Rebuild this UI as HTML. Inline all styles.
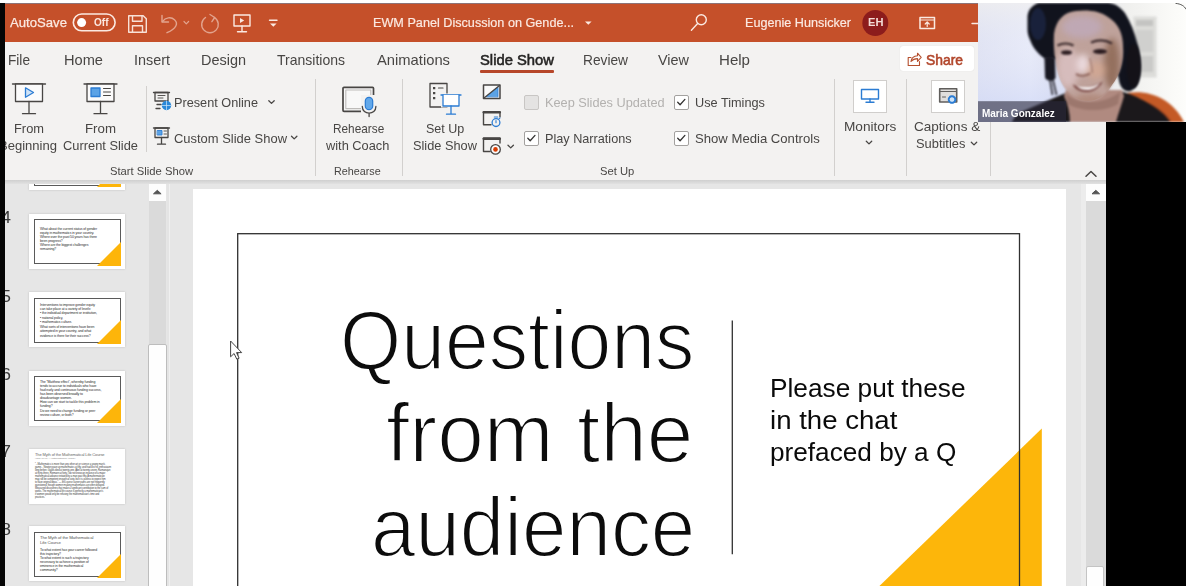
<!DOCTYPE html>
<html lang="en"><head><meta charset="utf-8"><title>PowerPoint - EWM Panel Discussion</title>
<style>
html,body{margin:0;padding:0;}
body{width:1186px;height:586px;overflow:hidden;background:#f3f2f1;font-family:"Liberation Sans",sans-serif;}
#root{position:relative;width:1186px;height:586px;overflow:hidden;background:#f3f2f1;}
.a{position:absolute;}
.t{position:absolute;white-space:pre;transform-origin:0 50%;}
.sep{position:absolute;width:1px;background:#d2d0ce;top:79px;height:97px;}
.cb{position:absolute;width:12.5px;height:12.5px;border:1px solid #a3a19f;border-radius:2px;background:#fff;box-sizing:content-box;}
.ibox{position:absolute;background:#fff;border:1px solid #d0cecc;box-sizing:border-box;}
.thumb{position:absolute;left:29px;width:96px;height:55px;background:#fff;box-shadow:0 0 2px rgba(0,0,0,.18);overflow:hidden;}
.thumb .fr{position:absolute;left:5px;top:5.5px;right:4.5px;bottom:4.5px;border:1.4px solid #5a5a5a;}
.thumb .tri{position:absolute;right:4px;bottom:3px;width:0;height:0;border-left:24px solid transparent;border-bottom:24px solid #fdb50a;}
.ln{position:absolute;height:1px;background:#777;opacity:.75;}
.tt{position:absolute;white-space:nowrap;font-size:3.5px;line-height:4.1px;color:#2c2c2c;font-family:"Liberation Sans",sans-serif;letter-spacing:-.12px;}

</style></head>
<body>
<div id="root">
<!-- top dark strip -->
<div class="a" style="left:0;top:0;width:1186px;height:3px;background:#fff"></div>
<div class="a" style="left:4px;top:3px;width:975px;height:1.2px;background:#8d7377"></div>
<!-- title bar -->
<div class="a" style="left:0;top:4px;width:990px;height:38px;background:#c5502a"></div>
<!-- tabs + ribbon background -->
<div class="a" style="left:0;top:42px;width:1106px;height:139px;background:#f3f2f1"></div>
<div class="a" style="left:0;top:180px;width:1106px;height:5px;background:linear-gradient(#cfcfcf,#e6e6e6)"></div>
<!-- work area -->
<div class="a" style="left:0;top:184px;width:1106px;height:402px;background:#e6e6e6"></div>

<!-- title bar icons -->
<svg class="a" style="left:0;top:3px" width="990" height="39" viewBox="0 3 990 39" fill="none" stroke="#fbe9e1" stroke-width="1.4" stroke-linecap="round" stroke-linejoin="round">
  <!-- autosave toggle -->
  <rect x="73.3" y="14" width="41.8" height="16.8" rx="8.4" stroke-width="1.6"/>
  <circle cx="81.6" cy="22.6" r="4.5" fill="#fff" stroke="none"/>
  <!-- save -->
  <g opacity=".95"><path d="M128.7 15.7h14.5l3.1 3.1v13.5h-17.6z"/><path d="M132.5 15.7v5.6h9.5v-5.6"/><path d="M132.5 32.3v-6.6h10v6.6"/></g>
  <!-- undo -->
  <g opacity=".55"><path d="M162 15.5v6.5h6.5"/><path d="M162.5 21.5c3-4 8.5-5 12-1.8c4 3.6 2 9-7.5 13"/>
  <path d="M184 21.5l2.3 2.3l2.3-2.3" stroke-width="1.2"/>
  <!-- redo -->
  <path d="M214.5 17.5a8.3 8.3 0 1 1-9 0"/><path d="M210 14.5l4.7 3l-2.8 4.2"/></g>
  <!-- present -->
  <g><rect x="234" y="15" width="16" height="11"/><path d="M242 26v5.5M237.5 31.7h9"/><path d="M240 18l4.2 2.5l-4.2 2.5z" fill="#fbe9e1" stroke="none"/></g>
  <!-- customize -->
  <path d="M269.5 20.2h7.5" /><path d="M270 23.5l3.3 3.2l3.3-3.2z" fill="#fbe9e1" stroke="none"/>
  <!-- title caret -->
  <path d="M585 21.5l3.3 3.3l3.3-3.3z" fill="#fbe9e1" stroke="none"/>
  <!-- search -->
  <circle cx="701.3" cy="19.8" r="5"/><path d="M697.6 23.6l-6.2 6.6"/>
  <!-- avatar -->
  <circle cx="875.3" cy="23" r="13" fill="#8c1c1c" stroke="none"/>
  <!-- ribbon display options -->
  <rect x="920" y="17.5" width="14.5" height="11" stroke-width="1.5"/><path d="M920 20h14.5" stroke-width="1"/><path d="M927.2 26.5v-4M925.2 24l2-2l2 2" stroke-width="1.2"/>
  <!-- minimize -->
  <path d="M972 23.5h8"/>
</svg>

<!-- Slide Show tab underline -->
<div class="a" style="left:480px;top:70px;width:74px;height:3px;background:#b7472a;border-radius:1px"></div>
<!-- share button -->
<div class="a" style="left:899.5px;top:46px;width:74px;height:24.5px;background:#fff;border-radius:3px;box-shadow:0 0 1px rgba(0,0,0,.15)"></div>
<svg class="a" style="left:905px;top:50px" width="18" height="18" viewBox="0 0 18 18" fill="none" stroke="#b5502f" stroke-width="1.1" stroke-linejoin="round" stroke-linecap="round">
  <path d="M6 7.5H3.2v8h11.3v-4"/><path d="M6 11.5c.5-3.5 3-5.5 6.5-5.7V3.2l3.7 4.1l-3.7 4.1V8.6c-2.8 0-4.8 .8-6.5 2.9z"/>
</svg>

<!-- ribbon separators -->
<div class="sep" style="left:146px;top:86px;height:66px"></div>
<div class="sep" style="left:314.5px"></div>
<div class="sep" style="left:401.5px"></div>
<div class="sep" style="left:834px"></div>
<div class="sep" style="left:905.5px"></div>
<div class="sep" style="left:989.5px"></div>

<!-- ribbon icons -->
<svg class="a" style="left:0;top:78px" width="1106" height="104" viewBox="0 78 1106 104" fill="none" stroke="#484644" stroke-width="1.3" stroke-linecap="round" stroke-linejoin="round">
  <!-- From Beginning -->
  <path d="M12.5 84h33"/><rect x="15.5" y="84" width="27" height="17.5" fill="#fbfbfb"/><path d="M29 101.5v12M22.5 113.7h13"/>
  <path d="M25.5 87.8l8 4.7l-8 4.7z" stroke="#2b7cd3" fill="#cfe3f7"/>
  <!-- From Current -->
  <path d="M84 84h33"/><rect x="87" y="84" width="27" height="17.5" fill="#fbfbfb"/><path d="M100.5 101.5v12M94 113.7h13"/>
  <rect x="91" y="88" width="9" height="8.5" fill="#5ba3e6" stroke="#2b7cd3"/><path d="M103.5 88.5h7M103.5 92h7M103.5 95.5h7" stroke-width="1"/>
  <!-- Present Online -->
  <path d="M153.5 92.5h16"/><rect x="155" y="92.5" width="13" height="8.5"/><path d="M158 95.5h7M158 98h5" stroke-width=".9"/><path d="M157 104.5h4M156 108.5h4"/>
  <circle cx="166.5" cy="105.5" r="4.7" fill="#2b88d8" stroke="none"/><path d="M162 105.5h9M166.5 101v9" stroke="#cfe6fa" stroke-width=".7"/>
  <path d="M268.8 100.7l2.7 2.7l2.7-2.7"/>
  <!-- Custom Slide Show -->
  <path d="M153.5 128h16"/><rect x="155" y="128" width="13" height="9.5"/><rect x="157.5" y="130.5" width="4.5" height="4.5" fill="#5ba3e6" stroke="#2b7cd3" stroke-width=".9"/><path d="M164 131h2.5M164 134h2.5" stroke-width=".9"/><path d="M161.5 137.5v6.5M157.5 144.2h8"/>
  <path d="M291.5 136.2l2.7 2.7l2.7-2.7"/>
  <!-- Rehearse with Coach -->
  <rect x="343" y="87.3" width="30.5" height="24" rx="1" stroke-width="1.7" fill="#f8f8f8"/><rect x="345.8" y="90" width="25" height="18.6" stroke="#bdbbb9" stroke-width="1.1"/>
  <rect x="361" y="95" width="17" height="23" fill="#f3f2f1" stroke="none"/>
  <rect x="365.3" y="97.3" width="7.4" height="12.4" rx="3.7" fill="#62a8ea" stroke="#2b7cd3" stroke-width="1.2"/><path d="M362.3 106.5c0 8.8 13.6 8.8 13.6 0M369.1 113.2v3.3"/>
  <!-- Set Up Slide Show -->
  <rect x="430" y="83.5" width="17" height="23.5"/><path d="M433 86.9h2.3v2.3h-2.3zM433 91.9h2.3v2.3h-2.3zM433 96.9h2.3v2.3h-2.3z" fill="#484644" stroke="none"/><path d="M438.5 88h4.5" stroke-width="1.2"/>
  <rect x="441" y="93.5" width="20" height="14" fill="#f3f2f1" stroke="none"/>
  <g stroke="#2b7cd3"><path d="M441 95h20"/><path d="M443 95v11h16v-11" fill="#fff"/><path d="M451 106v8M446.5 114.2h9"/></g>
  <!-- small icons -->
  <rect x="483.5" y="85" width="16.5" height="13.5" stroke-width="1.5" fill="#fafafa"/><path d="M486.5 96.5l11.5-9.3v9.3z" fill="#5ba3e6" stroke="#2b7cd3" stroke-width=".8"/><path d="M484 98l15.5-12.5" stroke-width="1.3"/>
  <path d="M483.5 124.8v-13h16.5v5M483.5 124.8h7.5" stroke-width="1.4"/><path d="M483.5 112.3h16.5" stroke-width="2.2"/><circle cx="496" cy="122.6" r="3.9" stroke="#2b7cd3" fill="#f3f2f1" stroke-width="1.3"/><path d="M496 120.6v2.2M494.3 117h3.4M499 118.8l1-1" stroke="#2b7cd3" stroke-width="1.1"/>
  <path d="M483.5 151.5v-13.5h16.5v5M483.5 151.5h6.5" stroke-width="1.4"/><path d="M483.5 138.8h16.5" stroke-width="2.2"/><circle cx="495.5" cy="149.4" r="4.8" fill="#fbfbfb" stroke-width="1.3"/><circle cx="495.5" cy="149.4" r="2.3" fill="#d83b01" stroke="none"/>
  <path d="M508 145.2l2.7 2.7l2.7-2.7"/>
  <!-- Monitors caret & Subtitles caret & collapse -->
  <path d="M866.3 141.2l2.7 2.7l2.7-2.7"/>
  <path d="M971.3 142.2l2.7 2.7l2.7-2.7"/>
  <path d="M1086 176.3l5-4.8l5 4.8" stroke-width="1.5"/>
</svg>
<!-- checkboxes -->
<div class="cb" style="left:524.3px;top:95px;border-color:#c8c6c4;background:#e4e3e2"></div>
<div class="cb" style="left:524.3px;top:131px"></div>
<div class="cb" style="left:674.2px;top:95px"></div>
<div class="cb" style="left:674.2px;top:131px"></div>
<svg class="a" style="left:520px;top:90px" width="180" height="60" viewBox="520 90 180 60" fill="none" stroke="#323130" stroke-width="1.3" stroke-linecap="round" stroke-linejoin="round">
  <path d="M527.8 138.3l2.4 2.4l4.8-5.3"/><path d="M677.7 102.3l2.4 2.4l4.8-5.3"/><path d="M677.7 138.3l2.4 2.4l4.8-5.3"/>
</svg>
<!-- Monitors / captions icon boxes -->
<div class="ibox" style="left:853px;top:80px;width:34px;height:32.5px"></div>
<div class="ibox" style="left:931px;top:80px;width:34px;height:32.5px"></div>
<svg class="a" style="left:850px;top:78px" width="120" height="40" viewBox="850 78 120 40" fill="none" stroke-width="1.4" stroke-linejoin="round" stroke-linecap="round">
  <g stroke="#2b7cd3"><rect x="861.5" y="89.5" width="17" height="9.5"/><path d="M870 99v3M866 102.3h8"/></g>
  <g stroke="#605e5c"><rect x="939.7" y="88.7" width="17" height="13.3" fill="#e1dfdd" stroke-width="1.6"/><path d="M940 91.5h16.5" stroke-width="1"/><path d="M942.5 97h3" stroke-width="1"/></g>
  <circle cx="952" cy="99.5" r="3.3" stroke="#2b7cd3" fill="#cfe3f7" stroke-width="2" stroke-dasharray="1.6 1"/>
</svg>
<!-- thumbnail pane -->
<div class="a" style="left:0;top:184px;width:148px;height:402px;overflow:hidden">
<div class="thumb" style="top:-49px"><div class="fr"></div><div class="tri"></div></div>
<div class="thumb" style="top:29.5px"><div class="fr"></div><div class="tri"></div>
  <div class="tt" style="left:11px;top:13px">What about the current status of gender<br>equity in mathematics in your country.<br>Where over the past 50 years has there<br>been progress?<br>Where are the biggest challenges<br>remaining?</div></div>
<div class="thumb" style="top:108px"><div class="fr"></div><div class="tri"></div>
  <div class="tt" style="left:11px;top:10.5px;line-height:4.45px">Interventions to improve gender equity<br>can take place at a variety of levels:<br>• the individual department or institution,<br>• national policy,<br>• mathematics culture.<br>What sorts of interventions have been<br>attempted in your country, and what<br>evidence is there for their success?</div></div>
<div class="thumb" style="top:186.5px"><div class="fr"></div><div class="tri"></div>
  <div class="tt" style="left:11px;top:9px;line-height:4.15px">The “Matthew effect”, whereby funding<br>tends to accrue to individuals who have<br>had early and continuous funding success,<br>has been observed broadly to<br>disadvantage women.<br>How can we start to tackle this problem in<br>funding?<br>Do we need to change funding or peer<br>review culture, or both?</div></div>
<div class="thumb" style="top:264.5px">
  <div class="tt" style="left:6px;top:3.5px;font-size:4px;line-height:5px;color:#666">The Myth of the Mathematical Life Course</div>
  <div class="tt" style="left:6px;top:8.5px;font-size:2.4px;line-height:3px;color:#888">Hardy (1940), “A Mathematician’s Apology”</div>
  <div class="tt" style="left:6px;top:14px;font-size:2.6px;line-height:3.05px;color:#444">“...Mathematics is more than any other art or science a young man’s<br>game... Newton gave up mathematics at fifty, and had lost his enthusiasm<br>long before. Galois died at twenty-one, Abel at twenty-seven, Ramanujan<br>at thirty-three, Riemann at forty. I do not know an instance of a major<br>mathematical advance initiated by a man past fifty. A mathematician<br>may still be competent enough at sixty, but it is useless to expect him<br>to have original ideas.” — life-course career paths are not frequently<br>questioned, though women making mathematics are often delayed.<br>Measured discoveries that make a significant contribution to the sum of<br>works. The mathematical life course is perfectly a mathematician’s<br>if women would only be refusing the mathematician’s time and<br>practices.”</div></div>
<div class="thumb" style="top:342px"><div class="fr"></div><div class="tri"></div>
  <div class="tt" style="left:11px;top:9px;font-size:4.3px;line-height:5.2px;color:#555">The Myth of the Mathematical<br>Life Course</div>
  <div class="tt" style="left:11px;top:22px;line-height:4.05px">To what extent has your career followed<br>this trajectory?<br>To what extent is such a trajectory<br>necessary to achieve a position of<br>eminence in the mathematical<br>community?</div></div>
</div>
<!-- thumbnail scrollbar -->
<div class="a" style="left:148.5px;top:184px;width:17.5px;height:402px;background:#dadada"></div>
<div class="a" style="left:148.5px;top:183.5px;width:17.5px;height:17px;background:#fdfdfd"></div>
<div class="a" style="left:148px;top:343.5px;width:17px;height:250px;background:#fefefe;border:1px solid #bdbdbd;border-radius:2px"></div>
<div class="a" style="left:166.8px;top:184px;width:2.4px;height:402px;background:#e4e4e4"></div>
<div class="a" style="left:169.2px;top:184px;width:1.2px;height:402px;background:#f0f0f0"></div>
<!-- canvas -->
<div class="a" style="left:192.5px;top:188.5px;width:873.5px;height:398px;background:#fff"></div>
<!-- right scrollbar -->
<div class="a" style="left:1086px;top:184px;width:19.5px;height:402px;background:#dadada"></div>
<div class="a" style="left:1086px;top:183.5px;width:19.5px;height:17px;background:#fdfdfd"></div>
<div class="a" style="left:1086.3px;top:565.5px;width:16px;height:30px;background:#fefefe;border:1px solid #c4c4c4;border-radius:2px"></div>
<div class="a" style="left:1081px;top:184px;width:5px;height:402px;background:#ececec"></div>
<svg class="a" style="left:140px;top:180px" width="970" height="30" viewBox="140 180 970 30"><path d="M153.5 193.8l3.8-3.5l3.8 3.5z" fill="#555" stroke="#555" stroke-width="1" stroke-linejoin="round"/><path d="M1092 193.8l3.8-3.5l3.8 3.5z" fill="#555" stroke="#555" stroke-width="1" stroke-linejoin="round"/></svg>
<!-- slide art -->
<svg class="a" style="left:192px;top:188px" width="874" height="398" viewBox="192 188 874 398">
  <path d="M1041.8 428.6V590H875.3z" fill="#fdb60a"/>
  <rect x="237.7" y="233.7" width="781.8" height="400" fill="none" stroke="#303030" stroke-width="1.3"/>
  <path d="M732.3 320.5V554.2" stroke="#303030" stroke-width="1.3"/>
  <!-- mouse cursor -->
  <path d="M230.6 341v15.8l3.5-3.3l2.7 5.7l2.3-1l-2.6-5.6h5.2z" fill="#fff" stroke="#444" stroke-width="1" stroke-linejoin="round"/>
</svg>

<span class="t" style="left:9.6px;top:14.8px;font-size:13.4px;line-height:16.08px;color:#fbe9e1;font-weight:400;font-family:'Liberation Sans', sans-serif;transform:scaleX(0.9814);-webkit-text-stroke:.25px #fbe9e1;">AutoSave</span>
<span class="t" style="left:94.3px;top:16.6px;font-size:10px;line-height:12.0px;color:#fbe9e1;font-weight:700;font-family:'Liberation Sans', sans-serif;transform:scaleX(1.0032);">Off</span>
<span class="t" style="left:373.0px;top:15.1px;font-size:13.2px;line-height:15.84px;color:#fbe9e1;font-weight:400;font-family:'Liberation Sans', sans-serif;transform:scaleX(0.9588);-webkit-text-stroke:.2px #fbe9e1;">EWM Panel Discussion on Gende...</span>
<span class="t" style="left:745.0px;top:15.1px;font-size:13.2px;line-height:15.84px;color:#fbe9e1;font-weight:400;font-family:'Liberation Sans', sans-serif;transform:scaleX(0.9575);-webkit-text-stroke:.2px #fbe9e1;">Eugenie Hunsicker</span>
<span class="t" style="left:867.5px;top:17.0px;font-size:10px;line-height:12.0px;color:#f3dcd6;font-weight:700;font-family:'Liberation Sans', sans-serif;transform:scaleX(1.1146);">EH</span>
<span class="t" style="left:8.0px;top:51.0px;font-size:15px;line-height:18.0px;color:#484644;font-weight:400;font-family:'Liberation Sans', sans-serif;transform:scaleX(0.9101);">File</span>
<span class="t" style="left:64.0px;top:51.0px;font-size:15px;line-height:18.0px;color:#484644;font-weight:400;font-family:'Liberation Sans', sans-serif;transform:scaleX(0.9746);">Home</span>
<span class="t" style="left:134.0px;top:51.0px;font-size:15px;line-height:18.0px;color:#484644;font-weight:400;font-family:'Liberation Sans', sans-serif;transform:scaleX(0.9596);">Insert</span>
<span class="t" style="left:201.0px;top:51.0px;font-size:15px;line-height:18.0px;color:#484644;font-weight:400;font-family:'Liberation Sans', sans-serif;transform:scaleX(0.9635);">Design</span>
<span class="t" style="left:277.0px;top:51.0px;font-size:15px;line-height:18.0px;color:#484644;font-weight:400;font-family:'Liberation Sans', sans-serif;transform:scaleX(0.9339);">Transitions</span>
<span class="t" style="left:377.0px;top:51.0px;font-size:15px;line-height:18.0px;color:#484644;font-weight:400;font-family:'Liberation Sans', sans-serif;transform:scaleX(0.9838);">Animations</span>
<span class="t" style="left:480.0px;top:51.0px;font-size:15px;line-height:18.0px;color:#252423;font-weight:400;font-family:'Liberation Sans', sans-serif;transform:scaleX(0.9861);-webkit-text-stroke:.55px #252423;">Slide Show</span>
<span class="t" style="left:583.0px;top:51.0px;font-size:15px;line-height:18.0px;color:#484644;font-weight:400;font-family:'Liberation Sans', sans-serif;transform:scaleX(0.9149);">Review</span>
<span class="t" style="left:658.0px;top:51.0px;font-size:15px;line-height:18.0px;color:#484644;font-weight:400;font-family:'Liberation Sans', sans-serif;transform:scaleX(0.9612);">View</span>
<span class="t" style="left:719.0px;top:51.0px;font-size:15px;line-height:18.0px;color:#484644;font-weight:400;font-family:'Liberation Sans', sans-serif;transform:scaleX(1.0046);">Help</span>
<span class="t" style="left:926.0px;top:50.5px;font-size:15px;line-height:18.0px;color:#b1452a;font-weight:400;font-family:'Liberation Sans', sans-serif;transform:scaleX(0.9243);-webkit-text-stroke:.6px #b1452a;">Share</span>
<span class="t" style="left:14.0px;top:120.6px;font-size:13px;line-height:15.6px;color:#484644;font-weight:400;font-family:'Liberation Sans', sans-serif;transform:scaleX(0.9887);">From</span>
<span class="t" style="left:-1.0px;top:137.9px;font-size:13px;line-height:15.6px;color:#484644;font-weight:400;font-family:'Liberation Sans', sans-serif;transform:scaleX(1.0030);">Beginning</span>
<span class="t" style="left:85.0px;top:120.6px;font-size:13px;line-height:15.6px;color:#484644;font-weight:400;font-family:'Liberation Sans', sans-serif;transform:scaleX(1.0216);">From</span>
<span class="t" style="left:63.0px;top:137.9px;font-size:13px;line-height:15.6px;color:#484644;font-weight:400;font-family:'Liberation Sans', sans-serif;transform:scaleX(0.9885);">Current Slide</span>
<span class="t" style="left:174.0px;top:94.7px;font-size:13px;line-height:15.6px;color:#484644;font-weight:400;font-family:'Liberation Sans', sans-serif;transform:scaleX(0.9767);">Present Online</span>
<span class="t" style="left:174.0px;top:130.7px;font-size:13px;line-height:15.6px;color:#484644;font-weight:400;font-family:'Liberation Sans', sans-serif;transform:scaleX(0.9960);">Custom Slide Show</span>
<span class="t" style="left:110.0px;top:165.1px;font-size:11.5px;line-height:13.8px;color:#484644;font-weight:400;font-family:'Liberation Sans', sans-serif;transform:scaleX(0.9763);">Start Slide Show</span>
<span class="t" style="left:333.0px;top:120.6px;font-size:13px;line-height:15.6px;color:#484644;font-weight:400;font-family:'Liberation Sans', sans-serif;transform:scaleX(0.9082);">Rehearse</span>
<span class="t" style="left:326.2px;top:137.9px;font-size:13px;line-height:15.6px;color:#484644;font-weight:400;font-family:'Liberation Sans', sans-serif;transform:scaleX(0.9858);">with Coach</span>
<span class="t" style="left:334.3px;top:165.1px;font-size:11.5px;line-height:13.8px;color:#484644;font-weight:400;font-family:'Liberation Sans', sans-serif;transform:scaleX(0.9363);">Rehearse</span>
<span class="t" style="left:425.5px;top:120.6px;font-size:13px;line-height:15.6px;color:#484644;font-weight:400;font-family:'Liberation Sans', sans-serif;transform:scaleX(0.9635);">Set Up</span>
<span class="t" style="left:412.8px;top:137.9px;font-size:13px;line-height:15.6px;color:#484644;font-weight:400;font-family:'Liberation Sans', sans-serif;transform:scaleX(0.9824);">Slide Show</span>
<span class="t" style="left:544.8px;top:94.7px;font-size:13px;line-height:15.6px;color:#b3b1af;font-weight:400;font-family:'Liberation Sans', sans-serif;transform:scaleX(0.9791);">Keep Slides Updated</span>
<span class="t" style="left:544.8px;top:131.0px;font-size:13px;line-height:15.6px;color:#484644;font-weight:400;font-family:'Liberation Sans', sans-serif;transform:scaleX(0.9744);">Play Narrations</span>
<span class="t" style="left:694.8px;top:94.7px;font-size:13px;line-height:15.6px;color:#484644;font-weight:400;font-family:'Liberation Sans', sans-serif;transform:scaleX(0.9772);">Use Timings</span>
<span class="t" style="left:694.8px;top:131.0px;font-size:13px;line-height:15.6px;color:#484644;font-weight:400;font-family:'Liberation Sans', sans-serif;transform:scaleX(1.0092);">Show Media Controls</span>
<span class="t" style="left:600.4px;top:165.1px;font-size:11.5px;line-height:13.8px;color:#484644;font-weight:400;font-family:'Liberation Sans', sans-serif;transform:scaleX(0.9752);">Set Up</span>
<span class="t" style="left:843.7px;top:118.5px;font-size:13px;line-height:15.6px;color:#484644;font-weight:400;font-family:'Liberation Sans', sans-serif;transform:scaleX(1.0490);">Monitors</span>
<span class="t" style="left:914.4px;top:118.5px;font-size:13px;line-height:15.6px;color:#484644;font-weight:400;font-family:'Liberation Sans', sans-serif;transform:scaleX(1.0410);">Captions &amp;</span>
<span class="t" style="left:916.3px;top:135.6px;font-size:13px;line-height:15.6px;color:#484644;font-weight:400;font-family:'Liberation Sans', sans-serif;transform:scaleX(0.9905);">Subtitles</span>
<span class="t" style="left:1.2px;top:208.3px;font-size:17px;line-height:20.4px;color:#3a3a3a;font-weight:400;font-family:'Liberation Sans', sans-serif;transform:scaleX(1.0561);">4</span>
<span class="t" style="left:1.2px;top:287.0px;font-size:17px;line-height:20.4px;color:#3a3a3a;font-weight:400;font-family:'Liberation Sans', sans-serif;transform:scaleX(1.0561);">5</span>
<span class="t" style="left:1.2px;top:365.3px;font-size:17px;line-height:20.4px;color:#3a3a3a;font-weight:400;font-family:'Liberation Sans', sans-serif;transform:scaleX(1.0561);">6</span>
<span class="t" style="left:1.2px;top:441.8px;font-size:17px;line-height:20.4px;color:#3a3a3a;font-weight:400;font-family:'Liberation Sans', sans-serif;transform:scaleX(1.0561);">7</span>
<span class="t" style="left:1.2px;top:520.1px;font-size:17px;line-height:20.4px;color:#3a3a3a;font-weight:400;font-family:'Liberation Sans', sans-serif;transform:scaleX(1.0561);">8</span>
<span class="t" style="left:340.2px;top:289.9px;font-size:84px;line-height:100.8px;color:#0c0c0c;font-weight:400;font-family:'Liberation Sans', sans-serif;transform:scaleX(0.9368);-webkit-text-stroke:2px #fff;">Questions</span>
<span class="t" style="left:386.2px;top:383.3px;font-size:84px;line-height:100.8px;color:#0c0c0c;font-weight:400;font-family:'Liberation Sans', sans-serif;transform:scaleX(0.9980);-webkit-text-stroke:2px #fff;">from the</span>
<span class="t" style="left:370.9px;top:476.7px;font-size:84px;line-height:100.8px;color:#0c0c0c;font-weight:400;font-family:'Liberation Sans', sans-serif;transform:scaleX(0.9511);-webkit-text-stroke:2px #fff;">audience</span>
<span class="t" style="left:770.1px;top:373.3px;font-size:25px;line-height:30.0px;color:#0a0a0a;font-weight:400;font-family:'Liberation Sans', sans-serif;transform:scaleX(1.0497);">Please put these</span>
<span class="t" style="left:770.1px;top:405.1px;font-size:25px;line-height:30.0px;color:#0a0a0a;font-weight:400;font-family:'Liberation Sans', sans-serif;transform:scaleX(1.1035);">in the chat</span>
<span class="t" style="left:770.1px;top:436.8px;font-size:25px;line-height:30.0px;color:#0a0a0a;font-weight:400;font-family:'Liberation Sans', sans-serif;transform:scaleX(1.0473);">prefaced by a Q</span>
<!-- black regions -->
<div class="a" style="left:0;top:3px;width:4.6px;height:583px;background:#050505"></div>
<div class="a" style="left:1106px;top:121px;width:80px;height:465px;background:#000"></div>
<!-- strip above video is light -->
<div class="a" style="left:978px;top:0;width:208px;height:3.5px;background:#fff"></div>
<!-- video tile -->
<div class="a" id="vid" style="left:978px;top:3px;width:208px;height:118.5px;overflow:hidden;background:#e9e9f1">
<svg width="208" height="119" viewBox="978 3 208 119" style="position:absolute;left:0;top:0">
  <defs>
  <filter color-interpolation-filters="sRGB" id="b0" x="-20%" y="-20%" width="140%" height="140%"><feGaussianBlur stdDeviation="0.8"/></filter>
  <filter color-interpolation-filters="sRGB" id="b1" x="-20%" y="-20%" width="140%" height="140%"><feGaussianBlur stdDeviation="1.3"/></filter>
  <filter color-interpolation-filters="sRGB" id="b2" x="-30%" y="-30%" width="160%" height="160%"><feGaussianBlur stdDeviation="3"/></filter>
  <filter color-interpolation-filters="sRGB" id="b3" x="-30%" y="-30%" width="160%" height="160%"><feGaussianBlur stdDeviation="5"/></filter>
  <linearGradient id="wall" x1="0" x2="1"><stop offset="0" stop-color="#e0e3f3"/><stop offset=".25" stop-color="#e9ecfa"/><stop offset=".4" stop-color="#dde0f0"/><stop offset=".72" stop-color="#f0f0ee"/><stop offset="1" stop-color="#fdfdfb"/></linearGradient><linearGradient id="wallv" x1="0" x2="0" y1="0" y2="1"><stop offset="0" stop-color="#f0efee" stop-opacity=".7"/><stop offset=".35" stop-color="#e4e6f4" stop-opacity=".2"/><stop offset="1" stop-color="#c9d3f7" stop-opacity=".75"/></linearGradient>
  <clipPath id="faceclip"><path d="M1054 34c2-14 10-22 22-23c12-1.5 24 0 32 6c10 6 15 16 15 30c1 14-3 28-11 38c-5 9-14 16-24 16c-10 0-20-6-26-18c-6-12-9-32-8-49z"/></clipPath>
  </defs>
  <rect x="978" y="3" width="208" height="119" fill="url(#wall)"/>
  <rect x="978" y="3" width="90" height="119" fill="url(#wallv)"/>
  <!-- poster on wall -->
  <g filter="url(#b0)"><rect x="1133.5" y="16.5" width="23" height="61" fill="#dcdcd9"/><rect x="1136" y="20" width="17" height="6" fill="#c4c4c2"/><rect x="1136" y="30" width="17" height="22" fill="#d0d0ce"/><rect x="1136" y="56" width="17" height="16" fill="#cacac8"/></g>
  <g filter="url(#b1)">
    <!-- chair -->
    <path d="M1127 93c22-4 46 6 57 29h-20c-8-12-20-20-37-21z" fill="#c45a26"/>
    <path d="M1140 100c14 3 26 12 32 22h-8c-6-9-15-15-26-17z" fill="#8e3a1a" opacity=".6"/>
    <!-- shirt -->
    <path d="M1012 122c2-6 8-10 16-13l28-12l12-5l52-1c8 2 18 6 28 12c10 6 18 12 22 19z" fill="#1b181b"/>
    <!-- neck -->
    <path d="M1066 90h56l2 6c-2 8-6 18-8 26h-46c0-8-2-18-6-26z" fill="#b08a80"/>
    <path d="M1066 94c10 10 36 12 54-2l-2 12c-14 8-36 8-50 0z" fill="#8d675c" opacity=".55"/>
    <!-- hair mass -->
    <path d="M1027.5 30v-14c1-7 5-11 11-13h70c8 1 13 5 17 11c5 8 9 18 12 30c3 10 4 22 3 30c-1 9-5 15-10 17c-5 1-9-2-11-8l-2-10v-50h-60v36h-12c-6-4-12-10-15-18c-2-4-3-8-3-11z" fill="#11131d"/>
    <rect x="1050" y="8" width="68" height="50" fill="#11131d"/>
    <ellipse cx="1038" cy="24" rx="8" ry="16" fill="#1d2848" opacity=".7"/>
    <!-- face base -->
    <path d="M1054 34c2-14 10-22 22-23c12-1.5 24 0 32 6c10 6 15 16 15 30c1 14-3 28-11 38c-5 9-14 16-24 16c-10 0-20-6-26-18c-6-12-9-32-8-49z" fill="#bfa29b"/>
  </g>
  <g clip-path="url(#faceclip)">
    <g filter="url(#b2)">
      <ellipse cx="1082" cy="27" rx="20" ry="11" fill="#bfa8b4"/>
      <ellipse cx="1068" cy="68" rx="11" ry="20" fill="#d6bcbc"/>
      <ellipse cx="1112" cy="64" rx="8" ry="26" fill="#94705e"/>
      <ellipse cx="1096" cy="70" rx="10" ry="9" fill="#cfa693"/>
      <ellipse cx="1083" cy="64" rx="6" ry="10" fill="#ead9dc"/>
      <ellipse cx="1090" cy="100" rx="16" ry="6" fill="#b08a7c"/>
    </g>
  </g>
  <g filter="url(#b1)">
    <!-- headphone left -->
    <path d="M1044.5 59c0-4 10-4 10.5 0l.5 18c0 5-10 5-10.5 0z" fill="#181822"/>
    <path d="M1050 80l2.5 15M1053 80l3.5 15" stroke="#25232b" stroke-width="1.6" fill="none"/>
    <!-- headphone right / hair right side -->
    <ellipse cx="1133.5" cy="66" rx="7" ry="22" fill="#141218"/>
  </g>
  <g filter="url(#b0)">
    <!-- brows -->
    <path d="M1057.5 45.5c5-2.5 11-2.5 16 0" stroke="#3b2a2c" stroke-width="2.2" fill="none"/>
    <path d="M1091 42.5c7-3 15-2.5 21 1" stroke="#3b2a2c" stroke-width="2.2" fill="none"/>
    <!-- eyes -->
    <ellipse cx="1066.5" cy="52.5" rx="5.5" ry="2.3" fill="#2b1c20"/>
    <ellipse cx="1100" cy="51.5" rx="7" ry="2.5" fill="#2b1c20"/>
    <!-- nose shadow -->
    <path d="M1076 74c3 2.5 10 2.5 14-.5" stroke="#8a5f56" stroke-width="1.8" fill="none"/>
    <path d="M1090 58c1 6 3 11 2 15" stroke="#a67f74" stroke-width="1.5" fill="none"/>
    <!-- mouth -->
    <path d="M1072.5 84.5c8 4 22 3 30.5-3c-4 8-12 11-18 10.5c-6-.5-10-3-12.5-7.5z" fill="#7c4a46"/>
    <path d="M1076 85.5c7 2.5 17 2 24-2c-4 5-9 6.5-13 6.5c-5 0-8-1.5-11-4.5z" fill="#f4eeee"/>
  </g>
  <rect x="978" y="101.2" width="88" height="21" fill="#2b2a3c" opacity=".6"/>
  <!-- rounded corner hint -->
  <path d="M1175.5 3.300c5.500 .700 9 2.700 10.500 6" stroke="#444" stroke-width=".9" fill="none"/>
</svg>
<span class="t" style="left:3.5px;top:102.5px;font-size:10.8px;line-height:14px;color:#fff;font-weight:700;transform:scaleX(.925)">Maria Gonzalez</span>
</div>

</div>
</body></html>
